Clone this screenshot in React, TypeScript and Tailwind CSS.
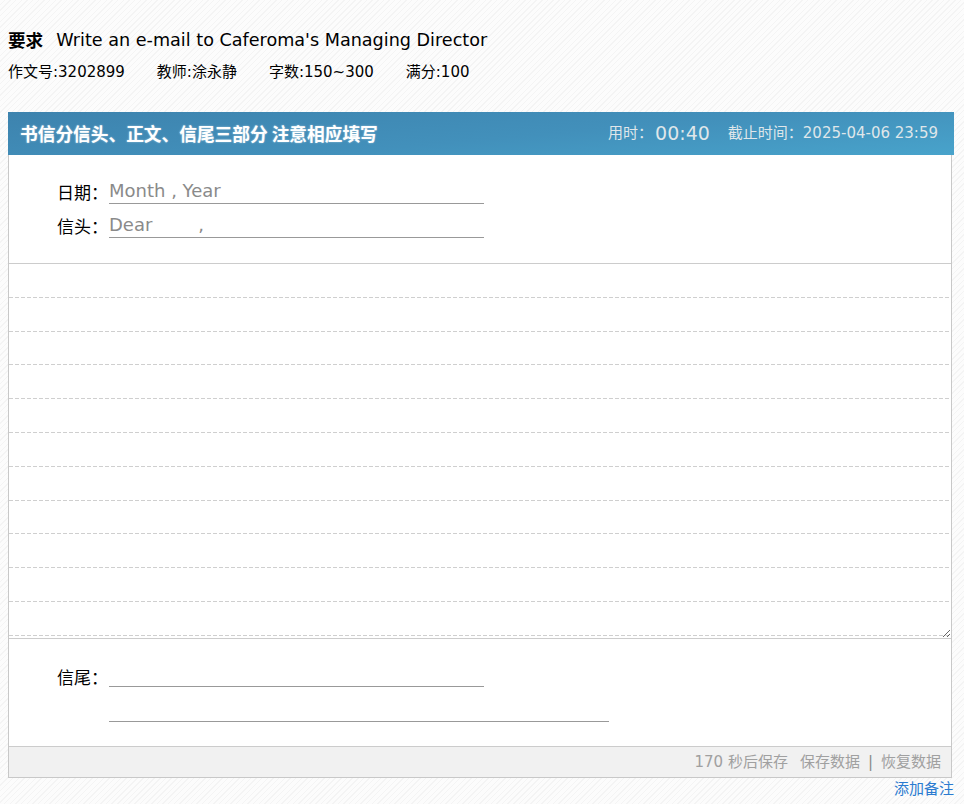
import React from 'react';

const LINES = Array.from({ length: 11 });

export default function App() {
  return (
    <div className="min-h-[804px] w-full bg-[repeating-linear-gradient(135deg,#fcfcfc_0px,#fcfcfc_3px,#f4f4f4_3px,#f4f4f4_4px)] font-['DejaVu_Sans','Noto_Sans_CJK_SC',sans-serif] text-black">
      {/* Task heading */}
      <div className="px-2 pt-[28px]">
        <div className="flex items-center gap-[13px] text-[17.6px] leading-6">
          <span className="font-bold font-['Noto_Sans_CJK_SC',sans-serif]">要求</span>
          <span>Write an e-mail to Caferoma's Managing Director</span>
        </div>
        <div className="mt-[10px] flex items-center gap-8 text-[15px] leading-5">
          <span>作文号:3202899</span>
          <span>教师:涂永静</span>
          <span>字数:150~300</span>
          <span>满分:100</span>
        </div>
      </div>

      {/* Letter panel */}
      <div className="ml-2 mt-[30px] w-[946px]">
        <div className="flex h-[43px] items-center justify-between bg-[linear-gradient(175deg,#3d83ae_0%,#4290bb_55%,#48a3cb_100%)] px-3">
          <span className="text-[17.7px] font-bold text-white [text-shadow:0_0_2px_rgba(255,255,255,0.5)] font-['Noto_Sans_CJK_SC',sans-serif]">
            书信分信头、正文、信尾三部分 注意相应填写
          </span>
          <div className="flex items-center pr-[4px] text-[#dfe6ea]">
            <span className="text-[15px]">用时：</span>
            <span className="ml-[2px] text-[19px]">00:40</span>
            <span className="ml-[18px] text-[15px]">截止时间：2025-04-06 23:59</span>
          </div>
        </div>

        <div className="mr-[2px] border-x border-b border-[#c8c8c8] bg-white">
          {/* Date / greeting */}
          <div className="flex flex-col gap-[9px] border-b border-[#cccccc] pb-[25px] pl-[48px] pt-[24px] text-[17px]">
            <div className="flex items-end">
              <span className="w-[52px] font-['Noto_Sans_CJK_SC',sans-serif] leading-6">日期：</span>
              <div className="w-[375px] border-b border-[#999] text-[18px] leading-6 text-[#8a8a8a]">Month , Year</div>
            </div>
            <div className="flex items-end">
              <span className="w-[52px] font-['Noto_Sans_CJK_SC',sans-serif] leading-6">信头：</span>
              <div className="w-[375px] whitespace-pre border-b border-[#999] text-[18px] leading-6 text-[#8a8a8a]">{'Dear        ,'}</div>
            </div>
          </div>

          {/* Body with ruled lines */}
          <div className="relative h-[375px] border-b border-[#cccccc]">
            <div className="flex flex-col">
              {LINES.map((_, i) => (
                <div key={i} className="flex h-[33.8px] flex-col justify-end">
                  <div className="h-px bg-[repeating-linear-gradient(to_right,#cfcfcf_0px,#cfcfcf_4px,transparent_4px,transparent_6px)]" />
                </div>
              ))}
            </div>
            <textarea className="absolute inset-0 h-full w-full resize-y bg-transparent outline-none" />
          </div>

          {/* Closing */}
          <div className="flex flex-col gap-[32px] pb-[24px] pl-[48px] pt-[26px] text-[17px]">
            <div className="flex items-end">
              <span className="w-[52px] font-['Noto_Sans_CJK_SC',sans-serif] leading-6">信尾：</span>
              <div className="mb-[2px] h-[13px] w-[375px] border-b border-[#999]" />
            </div>
            <div className="ml-[52px] w-[500px] border-b border-[#999]" />
          </div>

          {/* Save bar */}
          <div className="flex h-[31px] items-center justify-end gap-3 border-t border-[#cccccc] bg-[#f1f1f1] pr-[10px] text-[15px] text-[#a0a0a0]">
            <span>170 秒后保存</span>
            <span className="flex items-center gap-2">
              保存数据
              <span className="text-[#888]">|</span>
              恢复数据
            </span>
          </div>
        </div>

        <div className="flex justify-end pt-[1px] text-[15px] leading-5 text-[#2b7bd0]">
          <span>添加备注</span>
        </div>
      </div>
    </div>
  );
}
